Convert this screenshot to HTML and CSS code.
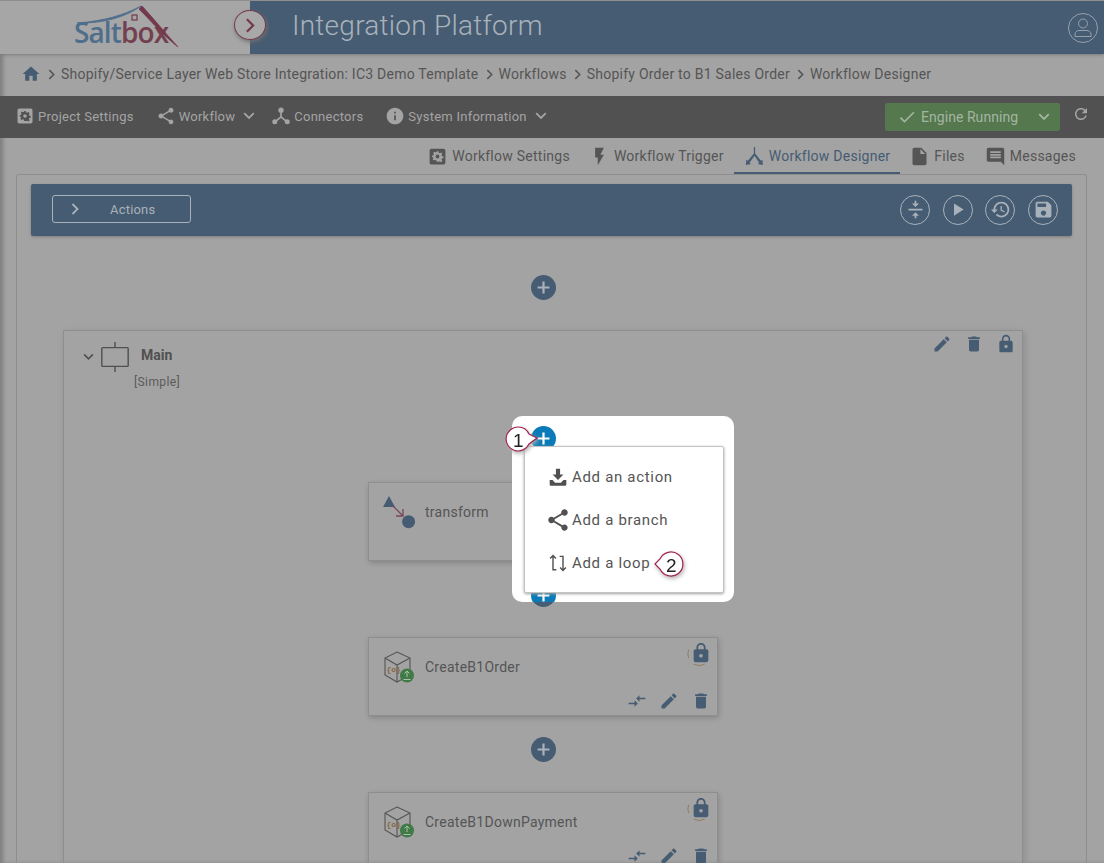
FILE: index.html
```html
<!DOCTYPE html>
<html lang="en">
<head>
<meta charset="utf-8">
<title>Integration Platform</title>
<link rel="stylesheet" href="styles.css">
</head>
<body>
<svg class="defs" width="0" height="0" aria-hidden="true">
  <symbol id="i-home" viewBox="0 0 24 24"><path d="M10 20v-6h4v6h5v-8h3L12 3 2 12h3v8z"/></symbol>
  <symbol id="i-gear" viewBox="0 0 24 24"><path fill-rule="evenodd" d="M19 3H5a2 2 0 0 0-2 2v14a2 2 0 0 0 2 2h14a2 2 0 0 0 2-2V5a2 2 0 0 0-2-2zM13 6l.4 1.7 1.2.5 1.5-.9 1.4 1.4-.9 1.5.5 1.2 1.7.6v2l-1.7.4-.5 1.2.9 1.5-1.4 1.4-1.5-.9-1.2.5L13 18h-2l-.4-1.7-1.2-.5-1.5.9-1.4-1.4.9-1.5-.5-1.2L5.700 13v-2l1.700-.4.5-1.200-.9-1.500 1.400-1.400 1.500.9 1.200-.5L11 6zM12 9.800a2.200 2.200 0 1 0 0 4.400 2.200 2.200 0 0 0 0-4.400z"/></symbol>
  <symbol id="i-share" viewBox="0 0 24 24"><path d="M18 16.080c-.76 0-1.440.3-1.960.77L8.910 12.700c.05-.23.09-.46.09-.7s-.04-.47-.09-.7l7.050-4.110c.54.5 1.250.81 2.040.81 1.660 0 3-1.340 3-3s-1.340-3-3-3-3 1.340-3 3c0 .24.04.47.09.7L8.040 9.810C7.500 9.310 6.790 9 6 9c-1.660 0-3 1.340-3 3s1.340 3 3 3c.79 0 1.500-.31 2.040-.81l7.120 4.160c-.05.21-.08.43-.08.65 0 1.610 1.310 2.920 2.920 2.920s2.920-1.310 2.920-2.920-1.310-2.920-2.920-2.920z"/></symbol>
  <symbol id="i-hub" viewBox="0 0 24 24"><circle cx="12" cy="5" r="3.200"/><circle cx="4.500" cy="19" r="3"/><circle cx="19.500" cy="19" r="3"/><path d="M11 6h2v6.500l6.500 5.600-1.300 1.500-6.200-5.300-6.200 5.300-1.300-1.500L11 12.500z"/></symbol>
  <symbol id="i-info" viewBox="0 0 24 24"><path d="M12 2C6.480 2 2 6.480 2 12s4.480 10 10 10 10-4.480 10-10S17.520 2 12 2zm1 15h-2v-6h2v6zm0-8h-2V7h2v2z"/></symbol>
  <symbol id="i-chev" viewBox="0 0 12 8"><path d="M1.200 1.200 6 6l4.800-4.800" fill="none" stroke="currentColor" stroke-width="1.800"/></symbol>
  <symbol id="i-right" viewBox="0 0 8 12"><path d="M1.500 1 6.500 6l-5 5" fill="none" stroke="currentColor" stroke-width="1.800"/></symbol>
  <symbol id="i-check" viewBox="0 0 24 24"><path d="M9 16.170 4.830 12l-1.420 1.410L9 19 21 7l-1.410-1.410z"/></symbol>
  <symbol id="i-refresh" viewBox="0 0 24 24"><path d="M17.650 6.350C16.200 4.900 14.210 4 12 4c-4.420 0-7.990 3.580-7.990 8s3.570 8 7.990 8c3.730 0 6.840-2.550 7.730-6h-2.080c-.82 2.330-3.040 4-5.650 4-3.310 0-6-2.690-6-6s2.690-6 6-6c1.660 0 3.140.69 4.220 1.780L13 11h7V4l-2.350 2.350z"/></symbol>
  <symbol id="i-flash" viewBox="0 0 24 24"><path d="M7 2v11h3v9l7-12h-4l4-8z"/></symbol>
  <symbol id="i-designer" viewBox="0 0 24 24"><path d="M11.300 1h1.400v7.500l6.600 8.400 1.700-1.300.6 6.100-5.900-1.100 1.700-1.400L12 11 6.300 19.200l1.700 1.400-5.900 1.100.6-6.100 1.700 1.300 6.900-8.400z"/></symbol>
  <symbol id="i-file" viewBox="0 0 24 24"><path d="M14 2H6c-1.100 0-2 .9-2 2v16c0 1.100.9 2 2 2h12c1.100 0 2-.9 2-2V8l-6-6zm-1 7V3.500L18.500 9H13z"/></symbol>
  <symbol id="i-msg" viewBox="0 0 24 24"><path d="M21.990 4c0-1.100-.89-2-1.990-2H4c-1.100 0-2 .9-2 2v12c0 1.100.9 2 2 2h14l4 4-.01-18zM18 14H6v-2h12v2zm0-3H6V9h12v2zm0-3H6V6h12v2z"/></symbol>
  <symbol id="i-edit" viewBox="0 0 24 24"><path d="M3 17.250V21h3.750L17.810 9.940l-3.750-3.750L3 17.250zM20.710 7.040c.39-.39.39-1.020 0-1.410l-2.340-2.340c-.39-.39-1.020-.39-1.410 0l-1.830 1.830 3.750 3.750 1.830-1.830z"/></symbol>
  <symbol id="i-del" viewBox="0 0 24 24"><path d="M6 19c0 1.100.9 2 2 2h8c1.100 0 2-.9 2-2V7H6v12zM19 4h-3.500l-1-1h-5l-1 1H5v2h14V4z"/></symbol>
  <symbol id="i-lock" viewBox="0 0 24 24"><path d="M18 8h-1V6c0-2.760-2.240-5-5-5S7 3.240 7 6v2H6c-1.100 0-2 .9-2 2v10c0 1.100.9 2 2 2h12c1.100 0 2-.9 2-2V10c0-1.100-.9-2-2-2zm-6 9c-1.100 0-2-.9-2-2s.9-2 2-2 2 .9 2 2-.9 2-2 2zm3.100-9H8.900V6c0-1.710 1.390-3.100 3.100-3.100s3.100 1.390 3.100 3.100v2z"/></symbol>
  <symbol id="i-lockring" viewBox="0 0 24 24" overflow="visible"><path d="M18 8h-1V6c0-2.760-2.240-5-5-5S7 3.240 7 6v2H6c-1.100 0-2 .9-2 2v10c0 1.100.9 2 2 2h12c1.100 0 2-.9 2-2V10c0-1.100-.9-2-2-2zm-6 9c-1.100 0-2-.9-2-2s.9-2 2-2 2 .9 2 2-.9 2-2 2zm3.100-9H8.900V6c0-1.710 1.390-3.100 3.100-3.100s3.100 1.390 3.100 3.100v2z"/><path d="M-1.500 8.500a13 13 0 0 0 0 9M4 24.200a13 13 0 0 0 12 0" fill="none" stroke="#8f7a55" stroke-width="1"/></symbol>
  <symbol id="i-collapse" viewBox="0 0 24 24"><path d="M8 19h3v3h2v-3h3l-4-4-4 4zm8-14h-3V2h-2v3H8l4 4 4-4zM4 11v2h16v-2H4z"/></symbol>
  <symbol id="i-play" viewBox="0 0 24 24"><path d="M8 5v14l11-7z"/></symbol>
  <symbol id="i-history" viewBox="0 0 24 24"><path d="M13 3c-4.970 0-9 4.030-9 9H1l3.890 3.890.07.14L9 12H6c0-3.870 3.130-7 7-7s7 3.130 7 7-3.130 7-7 7c-1.930 0-3.680-.79-4.940-2.060l-1.420 1.420C8.270 19.990 10.510 21 13 21c4.970 0 9-4.030 9-9s-4.030-9-9-9zm-1 5v5l4.280 2.540.72-1.210-3.500-2.080V8H12z"/></symbol>
  <symbol id="i-save" viewBox="0 0 24 24"><path d="M17 3H5c-1.110 0-2 .9-2 2v14c0 1.100.89 2 2 2h14c1.100 0 2-.9 2-2V7l-4-4zm-5 16c-1.660 0-3-1.340-3-3s1.340-3 3-3 3 1.340 3 3-1.340 3-3 3zm3-10H5V5h10v4z"/></symbol>
  <symbol id="i-plus" viewBox="0 0 24 24"><path d="M10.600 4.500h2.800v6.100h6.100v2.800h-6.100v6.100h-2.800v-6.100H4.500v-2.800h6.100z"/></symbol>
  <symbol id="i-compare" viewBox="0 0 24 24"><path d="M9 14H2v2h7v3l4-4-4-4zM15 13v-3h7V8h-7V5l-4 4z"/></symbol>
  <symbol id="i-action" viewBox="0 0 24 24"><path d="M9.500 2h5v7h4L12 15.500 5.500 9h4zM2 15.500h3.500l3 3.500h7l3-3.500H22V21a1.500 1.500 0 0 1-1.500 1.500h-17A1.500 1.500 0 0 1 2 21z"/></symbol>
  <symbol id="i-loop" viewBox="0 0 24 24"><path d="M2.500 6.500 6 3l3.500 3.500M6 3.500V20h4M14 4h4v16.500M14.500 17.500 18 21l3.500-3.500" fill="none" stroke="currentColor" stroke-width="1.700"/></symbol>
  <symbol id="i-step" viewBox="0 0 30 34"><path d="M15 1v6M15 27v6" stroke="currentColor" stroke-width="1.500" fill="none"/><rect x="1" y="7" width="28" height="20" rx="1" fill="none" stroke="currentColor" stroke-width="1.500"/></symbol>
  <symbol id="i-transform" viewBox="0 0 34 36"><path d="M1 12 7 1l6 11z" fill="#465c72"/><path d="M11 11l10 10M21 14v7h-7" fill="none" stroke="#78485a" stroke-width="1.300"/><circle cx="26.600" cy="26.700" r="6.500" fill="#465c72"/></symbol>
</svg>

<div class="page">
  <header class="topbar">
    <div class="brand">
      <span class="wordmark"><span class="word-salt">Salt</span><span class="word-box">box</span></span>
      <svg class="roof" viewBox="0 0 106 44" aria-hidden="true"><path class="roof-blue" d="M3 19C30 17 50 11 67 2 52 13 28 20 3 19z"/><path class="roof-red" d="M65 5 68 2C80 15 92 30 104 43 90 32 76 16 65 5z"/><rect class="roof-window" x="58" y="11" width="5" height="5"/></svg>
    </div>
    <button class="toggle" type="button"><svg class="ic-toggle"><use href="#i-right"/></svg></button>
    <div class="title">Integration Platform</div>
    <svg class="avatar" viewBox="0 0 30 30" aria-hidden="true"><circle cx="15" cy="15" r="14.500"/><circle cx="15" cy="10.500" r="4.500"/><path d="M7 23.500v-2.500c0-2 2-3.500 4-3.500h8c2 0 4 1.500 4 3.500v2.500z"/></svg>
  </header>

  <nav class="crumbs">
    <svg class="ic-home"><use href="#i-home"/></svg>
    <svg class="ic-sep"><use href="#i-right"/></svg><span>Shopify/Service Layer Web Store Integration: IC3 Demo Template</span>
    <svg class="ic-sep"><use href="#i-right"/></svg><span>Workflows</span>
    <svg class="ic-sep"><use href="#i-right"/></svg><span>Shopify Order to B1 Sales Order</span>
    <svg class="ic-sep"><use href="#i-right"/></svg><span>Workflow Designer</span>
  </nav>

  <div class="menubar">
    <a class="menu-item"><svg class="ic-nav"><use href="#i-gear"/></svg>Project Settings</a>
    <a class="menu-item item-wf"><svg class="ic-nav"><use href="#i-share"/></svg>Workflow<svg class="ic-chev"><use href="#i-chev"/></svg></a>
    <a class="menu-item item-conn"><svg class="ic-nav"><use href="#i-hub"/></svg>Connectors</a>
    <a class="menu-item item-sys"><svg class="ic-nav"><use href="#i-info"/></svg>System Information<svg class="ic-chev"><use href="#i-chev"/></svg></a>
    <div class="engine">
      <svg class="ic-check"><use href="#i-check"/></svg><span class="engine-label">Engine Running</span><svg class="ic-chev"><use href="#i-chev"/></svg>
    </div>
    <svg class="ic-refresh"><use href="#i-refresh"/></svg>
  </div>

  <div class="tabs">
    <a class="tab"><svg class="ic-tab"><use href="#i-gear"/></svg>Workflow Settings</a>
    <a class="tab tab-tight"><svg class="ic-tab"><use href="#i-flash"/></svg>Workflow Trigger</a>
    <a class="tab tab-active"><svg class="ic-tab"><use href="#i-designer"/></svg>Workflow Designer</a>
    <a class="tab tab-tight"><svg class="ic-tab"><use href="#i-file"/></svg>Files</a>
    <a class="tab"><svg class="ic-tab"><use href="#i-msg"/></svg>Messages</a>
  </div>

  <section class="panel">
    <div class="actionbar">
      <button class="actions-btn" type="button"><svg class="ic-act"><use href="#i-right"/></svg><span>Actions</span></button>
      <div class="bar-tools">
        <span class="round"><svg><use href="#i-collapse"/></svg></span>
        <span class="round"><svg><use href="#i-play"/></svg></span>
        <span class="round"><svg><use href="#i-history"/></svg></span>
        <span class="round"><svg><use href="#i-save"/></svg></span>
      </div>
    </div>

    <div class="canvas">
      <span class="plus plus-first"><svg><use href="#i-plus"/></svg></span>
      <div class="group">
        <div class="group-tools">
          <svg class="ic-tool"><use href="#i-edit"/></svg>
          <svg class="ic-tool"><use href="#i-del"/></svg>
          <svg class="ic-tool"><use href="#i-lock"/></svg>
        </div>
        <div class="group-head">
          <svg class="ic-groupchev"><use href="#i-chev"/></svg>
          <svg class="ic-step"><use href="#i-step"/></svg>
          <div class="group-name">Main</div>
        </div>
        <div class="group-type">[Simple]</div>
        <div class="flow">
          <span class="plus"><svg><use href="#i-plus"/></svg></span>
          <article class="card card-first">
            <div class="card-top"><svg class="ic-transform"><use href="#i-transform"/></svg><span class="card-name">transform</span></div>
          </article>
          <span class="plus"><svg><use href="#i-plus"/></svg></span>
          <article class="card">
            <div class="card-top">
              <svg class="ic-cube" viewBox="0 0 34 34" aria-hidden="true"><path class="cube-line" d="M13 2 26 8V25L13 32 1 25V8zM1 8 13 15 26 8M13 15V32"/><text class="cube-mark" x="2.500" y="22">{o}</text><circle class="cube-badge" cx="23" cy="25.500" r="7"/><path class="cube-arrow" d="M23 21v6M20.500 23.500 23 21l2.500 2.500M19.500 29.500h7"/></svg>
              <span class="card-name">CreateB1Order</span>
              <svg class="ic-lock"><use href="#i-lockring"/></svg>
            </div>
            <div class="card-actions"><svg class="ic-tool"><use href="#i-compare"/></svg><svg class="ic-tool"><use href="#i-edit"/></svg><svg class="ic-tool"><use href="#i-del"/></svg></div>
          </article>
          <span class="plus"><svg><use href="#i-plus"/></svg></span>
          <article class="card">
            <div class="card-top">
              <svg class="ic-cube" viewBox="0 0 34 34" aria-hidden="true"><path class="cube-line" d="M13 2 26 8V25L13 32 1 25V8zM1 8 13 15 26 8M13 15V32"/><text class="cube-mark" x="2.500" y="22">{o}</text><circle class="cube-badge" cx="23" cy="25.500" r="7"/><path class="cube-arrow" d="M23 21v6M20.500 23.500 23 21l2.500 2.500M19.500 29.500h7"/></svg>
              <span class="card-name">CreateB1DownPayment</span>
              <svg class="ic-lock"><use href="#i-lockring"/></svg>
            </div>
            <div class="card-actions"><svg class="ic-tool"><use href="#i-compare"/></svg><svg class="ic-tool"><use href="#i-edit"/></svg><svg class="ic-tool"><use href="#i-del"/></svg></div>
          </article>
        </div>
      </div>
    </div>
  </section>
</div>

<div class="spotlight">
  <span class="plus plus-lit plus-a"><svg><use href="#i-plus"/></svg></span>
  <span class="plus plus-lit plus-b"><svg><use href="#i-plus"/></svg></span>
  <ul class="addmenu">
    <li class="add-item"><svg class="ic-add"><use href="#i-action"/></svg>Add an action</li>
    <li class="add-item"><svg class="ic-add ic-add-share"><use href="#i-share"/></svg>Add a branch</li>
    <li class="add-item"><svg class="ic-add"><use href="#i-loop"/></svg>Add a loop</li>
  </ul>
</div>

<div class="callout callout-1">
  <svg viewBox="0 0 36 28" aria-hidden="true"><path d="M13 2a12 12 0 0 1 11 7L32 13 24 19A12 12 0 1 1 13 2z"/></svg>
  <span>1</span>
</div>
<div class="callout callout-2">
  <svg viewBox="0 0 36 28" aria-hidden="true"><path d="M1 13 6 8A12 12 0 1 1 6 18z"/></svg>
  <span>2</span>
</div>
</body>
</html>
```
FILE: styles.css
```css
* { box-sizing: border-box; }
html, body { margin: 0; padding: 0; }
body {
  position: relative;
  width: 1104px;
  height: 863px;
  overflow: hidden;
  background: #a3a3a3;
  font-family: Roboto, "Liberation Sans", sans-serif;
  color: #505050;
}
svg { fill: currentColor; flex: none; display: block; }
.defs { position: absolute; }
a { color: inherit; text-decoration: none; }
button { font: inherit; padding: 0; }

.page {
  height: 863px;
  box-shadow: inset 4px 0 4px -1px #7d7d7d;
}

/* header */
.topbar {
  position: relative;
  display: flex;
  align-items: center;
  height: 54px;
  border-top: 1px solid #8e8e8e;
  background: #465c72;
  color: #a9b2bb;
  box-shadow: 0 1px 3px #7b7b7b;
}
.brand {
  position: relative;
  width: 250px;
  height: 100%;
  background: #a6a6a6;
}
.wordmark {
  position: absolute;
  left: 74px;
  top: 12px;
  font: 600 28px/38px "Open Sans", "Liberation Sans", sans-serif;
  letter-spacing: -.9px;
}
.word-salt { color: #4f6e8b; }
.word-box { color: #74404f; }
.roof { position: absolute; left: 74px; top: 3px; width: 106px; height: 44px; overflow: visible; }
.roof-blue { fill: #4f6e8b; stroke: #4f6e8b; stroke-width: .8; }
.roof-red { fill: #74384c; stroke: #74384c; stroke-width: .8; }
.roof-window { fill: none; stroke: #74384c; stroke-width: 1.200; }
.toggle {
  position: absolute;
  left: 234px;
  top: 9px;
  width: 32px;
  height: 30px;
  border: 1px solid #74384c;
  border-radius: 50%;
  background: #a8a8a8;
  color: #74384c;
  box-shadow: 1px 2px 4px #6f6f6f;
  display: flex;
  align-items: center;
  justify-content: center;
}
.ic-toggle { width: 10px; height: 15px; }
.title {
  margin: -3px 0 0 42px;
  font-size: 28px;
  font-weight: 300;
  letter-spacing: .25px;
  line-height: 50px;
}
.avatar {
  margin-left: auto;
  margin-right: 6px;
  width: 30px;
  height: 30px;
  fill: none;
  stroke: #a9b2bb;
  stroke-width: .8;
}

/* breadcrumbs */
.crumbs {
  display: flex;
  align-items: center;
  height: 42px;
  padding: 0 0 2px 21px;
  font-size: 14px;
  letter-spacing: .24px;
  color: #555;
}
.ic-home { width: 20px; height: 20px; color: #465c72; }
.ic-sep { width: 7px; height: 11px; margin: 1px 6px 0 7px; color: #555; }

/* menu bar */
.menubar {
  display: flex;
  align-items: center;
  height: 42px;
  padding: 0 0 2px 17px;
  background: #515151;
  color: #a4a4a4;
  font-size: 13px;
}
.menu-item { display: flex; align-items: center; letter-spacing: .25px; }
.item-wf { margin-left: 24px; }
.item-conn { margin-left: 18px; }
.item-sys { margin-left: 24px; }
.ic-nav { width: 20px; height: 20px; margin: 0 3px 0 -2px; }
.ic-chev { width: 12px; height: 8px; margin-left: 8px; }
.engine {
  display: flex;
  align-items: center;
  width: 175px;
  height: 28px;
  margin: 2px 0 0 auto;
  padding-left: 12px;
  border-radius: 2px;
  background: #55784f;
  color: #a4b5a1;
  font-size: 14px;
}
.ic-check { width: 20px; height: 20px; margin-right: 4px; }
.engine-label { letter-spacing: .05px; }
.engine .ic-chev { margin-left: 20px; }
.ic-refresh { width: 18px; height: 18px; margin: -4px 14px 0 12px; }

/* tabs */
.tabs {
  display: flex;
  justify-content: flex-end;
  height: 36px;
  padding-right: 18px;
  font-size: 14px;
  letter-spacing: .25px;
  color: #555;
}
.tab {
  display: flex;
  align-items: center;
  padding: 2px 10px 0;
  border-bottom: 2px solid transparent;
}
.tab-tight { margin-left: -1px; }
.ic-tab { width: 21px; height: 21px; margin-right: 4px; }
.tab-active { color: #465c72; border-bottom-color: #465c72; }

/* panel */
.panel {
  width: 1071px;
  height: 700px;
  margin-left: 16px;
  padding: 9px 14px 0;
  border: 1px solid #8e8e8e;
  border-bottom: 0;
  border-radius: 3px 3px 0 0;
}
.actionbar {
  display: flex;
  align-items: center;
  justify-content: space-between;
  height: 52px;
  padding: 0 14px 0 21px;
  border-radius: 2px;
  background: #465c72;
  color: #a9b2bb;
  box-shadow: 0 1px 3px #7d7d7d;
}
.actions-btn {
  display: flex;
  align-items: center;
  width: 139px;
  height: 28px;
  margin-bottom: 3px;
  padding-left: 18px;
  border: 1px solid #a9b2bb;
  border-radius: 3px;
  background: none;
  color: inherit;
  font-size: 13px;
  letter-spacing: .2px;
}
.ic-act { width: 8px; height: 12px; }
.actions-btn span { margin: 1px 0 0 31px; }
.bar-tools { display: flex; gap: 12.670px; margin-bottom: 1px; }
.round {
  display: flex;
  align-items: center;
  justify-content: center;
  width: 30px;
  height: 30px;
  border: 1px solid #a9b2bb;
  border-radius: 50%;
}
.round svg { width: 21px; height: 21px; }

/* canvas */
.canvas {
  display: flex;
  flex-direction: column;
  align-items: center;
  width: 960px;
  margin-left: 32px;
  padding-top: 39px;
}
.plus {
  display: flex;
  align-items: center;
  justify-content: center;
  width: 25px;
  height: 25px;
  border-radius: 50%;
  background: #465c72;
  color: #a9b2bb;
}
.plus svg { width: 19px; height: 19px; }
.plus-first { margin-bottom: 30px; }

.group {
  position: relative;
  width: 960px;
  height: 560px;
  padding: 10px 0 0 19px;
  border: 1px solid #8e8e8e;
  border-bottom: 0;
  box-shadow: 2px 2px 6px #8f8f8f;
}
.group-tools {
  position: absolute;
  right: 6px;
  top: 3px;
  display: flex;
  gap: 12px;
}
.group-head { display: flex; align-items: center; height: 32px; color: #505050; }
.ic-groupchev { width: 11px; height: 8px; }
.ic-step { width: 30px; height: 32px; margin-left: 6px; }
.group-name { margin: -4px 0 0 11px; font-size: 14px; font-weight: 700; }
.group-type { margin: 2px 0 0 51px; font-size: 12px; letter-spacing: .4px; color: #5a5a5a; }
.ic-tool { width: 20px; height: 20px; color: #465c72; }

.flow {
  display: flex;
  flex-direction: column;
  align-items: center;
  margin: 36px 0 0 -19px;
}
.card {
  display: flex;
  flex-direction: column;
  justify-content: space-between;
  width: 350px;
  height: 79px;
  margin: 30px 0 21px;
  padding: 12px 6px 4px 15px;
  border: 1px solid #8e8e8e;
  box-shadow: 1px 2px 5px #858585;
}
.card-first { margin-top: 32px; margin-bottom: 21px; }
.card-top { display: flex; align-items: flex-start; }
.card-name {
  margin: 10px 0 0 9px;
  font-size: 14px;
  line-height: 15px;
  letter-spacing: .26px;
  color: #555;
}
.ic-transform { width: 34px; height: 36px; margin-left: -2px; }
.ic-cube { width: 34px; height: 34px; margin-right: -2px; }
.cube-line { fill: none; stroke: #555; stroke-width: 1.100; }
.cube-mark { font: 700 8px "Liberation Mono", monospace; fill: #87683f; }
.cube-badge { fill: #3f7a47; }
.cube-arrow { fill: none; stroke: #a9c0ac; stroke-width: 1; }
.ic-lock { width: 22px; height: 22px; margin: -8px -1px 0 auto; color: #465c72; overflow: visible; }
.card-actions { display: flex; justify-content: flex-end; gap: 12px; }

/* highlighted menu */
.spotlight {
  position: absolute;
  left: 512px;
  top: 416px;
  width: 222px;
  height: 186px;
  overflow: hidden;
  border-radius: 10px;
  background: #fff;
}
.plus-lit { position: absolute; left: 18.500px; background: #0a7ab8; color: #fff; }
.plus-a { top: 10px; }
.plus-b { top: 167px; }
.addmenu {
  position: absolute;
  left: 12px;
  top: 30px;
  width: 200px;
  height: 147px;
  margin: 0;
  padding: 8px 0 0 23px;
  list-style: none;
  background: #fff;
  border: 1px solid #c4c4c4;
  border-radius: 2px;
  box-shadow: 0 1px 3px #a0a0a0;
}
.add-item {
  display: flex;
  align-items: center;
  height: 43px;
  font-size: 15px;
  letter-spacing: .68px;
  color: #555;
}
.ic-add { width: 20px; height: 20px; margin-right: 4px; color: #505050; }
.ic-add-share { width: 26px; height: 26px; margin: -2px 1.250px -2px -3.250px; }

/* callouts */
.callout {
  position: absolute;
  width: 36px;
  height: 28px;
  filter: drop-shadow(1px 2px 2px #b0b0b0);
}
.callout svg { width: 36px; height: 28px; fill: #fff; stroke: #a3254d; stroke-width: 1.200; }
.callout span {
  position: absolute;
  font: 19px/20px "Liberation Sans", sans-serif;
  color: #222;
}
.callout-1 { left: 505px; top: 425px; }
.callout-1 span { left: 8px; top: 6px; }
.callout-2 { left: 654px; top: 551px; }
.callout-2 span { left: 12px; top: 5px; }
```
